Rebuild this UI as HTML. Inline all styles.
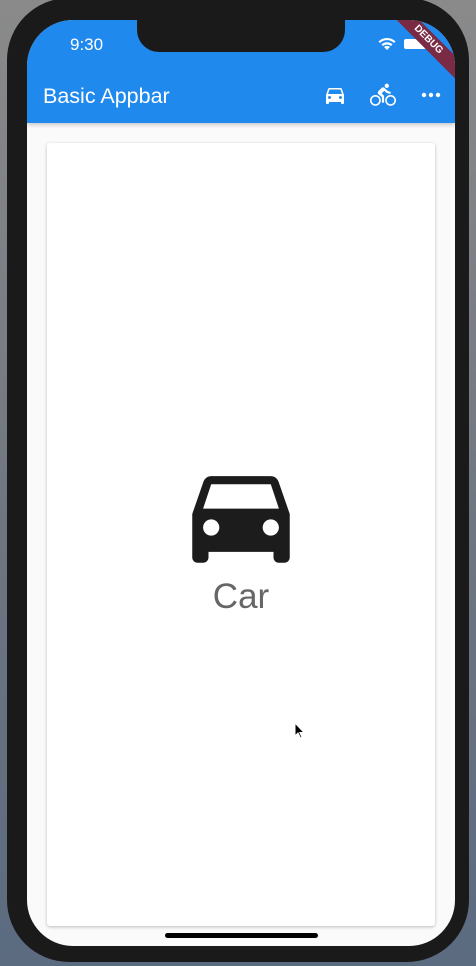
<!DOCTYPE html>
<html><head><style>
html,body{margin:0;padding:0;width:476px;height:966px;overflow:hidden;background:linear-gradient(#8a8a8a,#6d7480 60%,#5b6b80);font-family:"Liberation Sans",sans-serif;}
.phone{position:absolute;left:7px;top:-2px;width:462px;height:964px;background:#1a1a1a;border-radius:62px;}
.screen{position:absolute;left:27px;top:20px;width:428px;height:926px;background:#fafafa;border-radius:46px;overflow:hidden;}
.bar{position:absolute;left:0;top:0;width:428px;height:103px;background:#2089ee;box-shadow:0 2px 4px rgba(0,0,0,.2);}
.notch{position:absolute;left:110px;top:0;width:208px;height:32px;background:#1a1a1a;border-radius:0 0 22px 22px;}
.time{position:absolute;left:43px;top:15px;color:#fff;font-size:17px;}
.title{position:absolute;left:16px;top:64px;color:#fff;font-size:21.5px;}
.card{position:absolute;left:20px;top:123px;width:388px;height:783px;background:#fff;border-radius:3px;box-shadow:0 1px 3px rgba(0,0,0,.25);}
.label{position:absolute;left:0;width:388px;top:434px;text-align:center;font-size:35px;color:#666;}
.home{position:absolute;left:138px;top:913px;width:153px;height:5px;background:#000;border-radius:3px;}
.debug{position:absolute;right:-28px;top:12px;width:110px;height:16px;background:#7a2a45;transform:rotate(45deg);color:#fff;font-size:10px;font-weight:bold;text-align:center;line-height:16px;}
</style></head><body>
<div class="phone"></div>
<div class="screen">
 <div class="bar">
  <div class="time">9:30</div>
  <svg style="position:absolute;left:350px;top:17px" width="20" height="14" viewBox="0 0 20 14"><path d="M10 13 L7 10 A4.5 4.5 0 0 1 13 10Z M4.5 7.5 A8 8 0 0 1 15.5 7.5 L14 9 A6 6 0 0 0 6 9Z M1.5 4.5 A12 12 0 0 1 18.5 4.5 L17 6 A10 10 0 0 0 3 6Z" fill="#fff"/></svg>
  <div style="position:absolute;left:377px;top:19px;width:22px;height:10px;background:#fff;border-radius:2px"></div>
  <div class="debug">DEBUG</div>
  <div class="title">Basic Appbar</div>
  <svg style="position:absolute;left:296px;top:63px" width="24" height="24" viewBox="0 0 24 24"><path fill="#fff" d="M18.92 6.01C18.72 5.42 18.16 5 17.5 5h-11c-.66 0-1.21.42-1.420 1.01L3 12v8c0 .55.45 1 1 1h1c.55 0 1-.45 1-1v-1h12v1c0 .55.45 1 1 1h1c.55 0 1-.45 1-1v-8l-2.08-5.99zM6.5 16c-.83 0-1.5-.67-1.5-1.5S5.67 13 6.5 13s1.5.67 1.5 1.5S7.33 16 6.5 16zm11 0c-.83 0-1.5-.67-1.5-1.5s.67-1.5 1.5-1.5 1.5.67 1.5 1.5-.67 1.5-1.5 1.5zM5 11l1.5-4.5h11L19 11H5z"/></svg>
  <svg style="position:absolute;left:343px;top:62px" width="26" height="26" viewBox="0 0 24 24"><path fill="#fff" d="M15.5 5.5c1.1 0 2-.9 2-2s-.9-2-2-2-2 .9-2 2 .9 2 2 2zM5 12c-2.8 0-5 2.2-5 5s2.2 5 5 5 5-2.2 5-5-2.2-5-5-5zm0 8.5c-1.9 0-3.5-1.6-3.5-3.5s1.6-3.5 3.5-3.5 3.5 1.6 3.5 3.5-1.6 3.5-3.5 3.5zm5.8-10l2.4-2.4.8.8c1.3 1.3 3 2.1 5.1 2.1V9c-1.5 0-2.7-.6-3.6-1.5l-1.9-1.900c-.5-.4-1-.6-1.6-.6s-1.100.2-1.400.6L7.8 8.4c-.4.4-.6.9-.6 1.400 0 .6.2 1.100.6 1.400L11 14v5h2v-6.200l-2.200-2.300zM19 12c-2.8 0-5 2.2-5 5s2.2 5 5 5 5-2.2 5-5-2.2-5-5-5zm0 8.5c-1.9 0-3.5-1.6-3.5-3.5s1.6-3.5 3.5-3.5 3.5 1.6 3.5 3.5-1.6 3.5-3.5 3.5z"/></svg>
  <svg style="position:absolute;left:392px;top:63px" width="24" height="24" viewBox="0 0 24 24"><circle cx="5" cy="12" r="2.2" fill="#fff"/><circle cx="12" cy="12" r="2.2" fill="#fff"/><circle cx="19" cy="12" r="2.2" fill="#fff"/></svg>
 </div>
 <div class="notch"></div>
 <div class="card">
  <svg style="position:absolute;left:129px;top:306px" width="130" height="130" viewBox="0 0 24 24"><path fill="#1c1c1c" d="M18.92 6.01C18.72 5.42 18.16 5 17.5 5h-11c-.66 0-1.21.42-1.420 1.01L3 12v8c0 .55.45 1 1 1h1c.55 0 1-.45 1-1v-1h12v1c0 .55.45 1 1 1h1c.55 0 1-.45 1-1v-8l-2.08-5.99zM6.5 16c-.83 0-1.5-.67-1.5-1.5S5.670 13 6.5 13s1.5.67 1.5 1.5S7.33 16 6.5 16zm11 0c-.83 0-1.5-.67-1.5-1.5s.67-1.5 1.5-1.5 1.5.67 1.5 1.5-.67 1.5-1.5 1.5zM5 11l1.5-4.5h11L19 11H5z"/></svg>
  <div class="label">Car</div>
 </div>
 <div class="home"></div>
</div>
<svg style="position:absolute;left:294px;top:722px" width="12" height="18" viewBox="0 0 12 18"><path d="M1 1 L1 14 L4 11 L6.5 16 L8 15.300 L5.8 10.5 L10 10.5Z" fill="#000" stroke="#fff" stroke-width="1"/></svg>
</body></html>
